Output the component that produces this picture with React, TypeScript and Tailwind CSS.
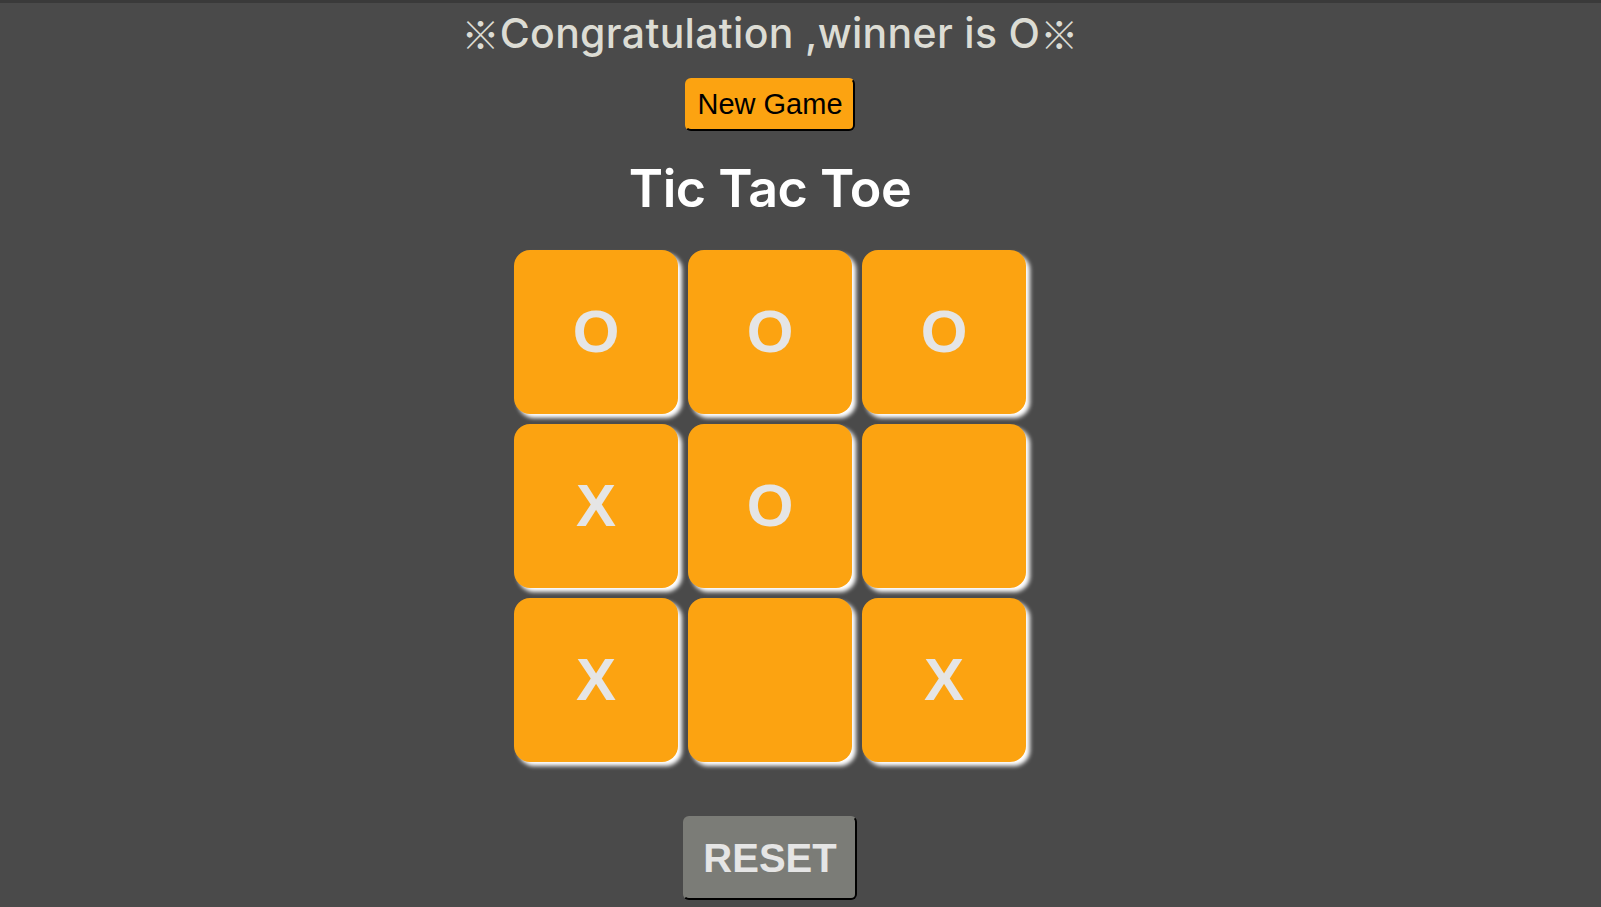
import React from 'react';

const board = ['O', 'O', 'O', 'X', 'O', '', 'X', '', 'X'];

export default function App() {
  return (
    <div className="min-h-screen w-full bg-[#4a4a4a]">
      <div className="h-[3px] w-full bg-[#3a3a3a]" />
      <div className="w-[1540px] flex flex-col items-center">
        <h2 className="font-['Inter',sans-serif] font-medium text-[41px] leading-[60px] text-[#dcdcd4] tracking-[0.3px] flex items-center">
          <span className="font-['Noto_Sans_CJK_JP',sans-serif] font-light text-[38px]">※</span>
          Congratulation ,winner is O
          <span className="font-['Noto_Sans_CJK_JP',sans-serif] font-light text-[38px]">※</span>
        </h2>
        <button className="mt-[15px] h-[53px] px-[10px] rounded-md bg-[#fca311] border-2 border-black border-t-transparent border-l-transparent font-['Liberation_Sans',Arial,sans-serif] text-[29px] text-black">
          New Game
        </button>
        <h1 className="mt-[28px] font-['Inter',sans-serif] font-semibold text-[52px] leading-[60px] text-white tracking-[-0.5px]">
          Tic Tac Toe
        </h1>
        <div className="mt-[31px] grid grid-cols-3 gap-[10px]">
          {board.map((v, i) => (
            <button
              key={i}
              className="w-[164px] h-[164px] rounded-2xl bg-[#fca311] shadow-[4px_4px_4px_white] flex items-center justify-center font-['Liberation_Sans',Arial,sans-serif] font-bold text-[60px] text-[#e5e5e5]"
            >
              {v}
            </button>
          ))}
        </div>
        <button className="mt-[54px] h-[84px] px-[18px] rounded-md bg-[#7b7c77] border-2 border-black border-t-transparent border-l-transparent font-['Liberation_Sans',Arial,sans-serif] font-bold text-[40px] text-[#e5e5e5]">
          RESET
        </button>
      </div>
    </div>
  );
}
